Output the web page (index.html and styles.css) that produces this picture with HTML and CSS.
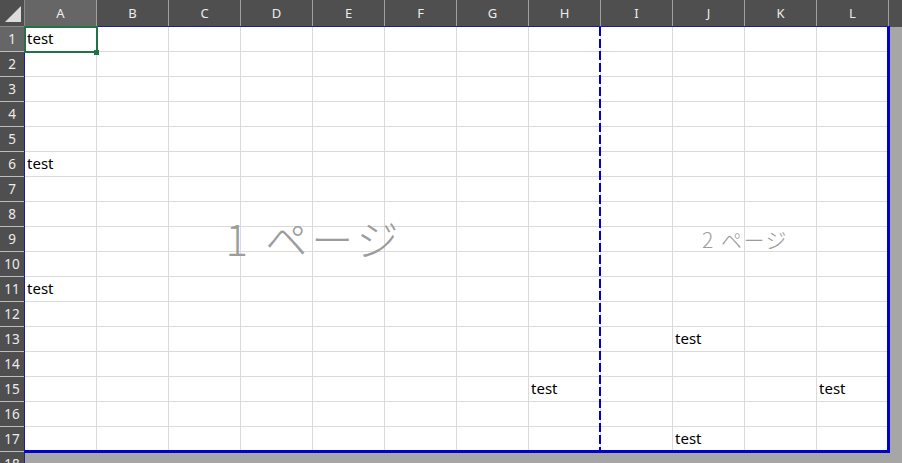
FILE: index.html
```html
<!DOCTYPE html>
<html lang="ja">
<head>
<meta charset="utf-8">
<title>Sheet</title>
<link rel="stylesheet" href="styles.css">
</head>
<body>
<div class="sheet">
  <div class="hdr-row">
    <div class="corner"><svg class="tri" width="16" height="16" viewBox="0 0 16 16"><polygon points="16,0 16,16 0,16" fill="#dcdcdc"/></svg></div>
    <div class="col-h sel">A</div><div class="col-h">B</div><div class="col-h">C</div><div class="col-h">D</div><div class="col-h">E</div><div class="col-h">F</div><div class="col-h">G</div><div class="col-h">H</div><div class="col-h">I</div><div class="col-h">J</div><div class="col-h">K</div><div class="col-h">L</div>
    <div class="col-fill"></div>
  </div>
  <div class="row"><div class="row-h sel">1</div><div class="cell">test</div><div class="cell"></div><div class="cell"></div><div class="cell"></div><div class="cell"></div><div class="cell"></div><div class="cell"></div><div class="cell"></div><div class="cell"></div><div class="cell"></div><div class="cell"></div><div class="cell"></div><div class="fill"></div></div>
  <div class="row"><div class="row-h">2</div><div class="cell"></div><div class="cell"></div><div class="cell"></div><div class="cell"></div><div class="cell"></div><div class="cell"></div><div class="cell"></div><div class="cell"></div><div class="cell"></div><div class="cell"></div><div class="cell"></div><div class="cell"></div><div class="fill"></div></div>
  <div class="row"><div class="row-h">3</div><div class="cell"></div><div class="cell"></div><div class="cell"></div><div class="cell"></div><div class="cell"></div><div class="cell"></div><div class="cell"></div><div class="cell"></div><div class="cell"></div><div class="cell"></div><div class="cell"></div><div class="cell"></div><div class="fill"></div></div>
  <div class="row"><div class="row-h">4</div><div class="cell"></div><div class="cell"></div><div class="cell"></div><div class="cell"></div><div class="cell"></div><div class="cell"></div><div class="cell"></div><div class="cell"></div><div class="cell"></div><div class="cell"></div><div class="cell"></div><div class="cell"></div><div class="fill"></div></div>
  <div class="row"><div class="row-h">5</div><div class="cell"></div><div class="cell"></div><div class="cell"></div><div class="cell"></div><div class="cell"></div><div class="cell"></div><div class="cell"></div><div class="cell"></div><div class="cell"></div><div class="cell"></div><div class="cell"></div><div class="cell"></div><div class="fill"></div></div>
  <div class="row"><div class="row-h">6</div><div class="cell">test</div><div class="cell"></div><div class="cell"></div><div class="cell"></div><div class="cell"></div><div class="cell"></div><div class="cell"></div><div class="cell"></div><div class="cell"></div><div class="cell"></div><div class="cell"></div><div class="cell"></div><div class="fill"></div></div>
  <div class="row"><div class="row-h">7</div><div class="cell"></div><div class="cell"></div><div class="cell"></div><div class="cell"></div><div class="cell"></div><div class="cell"></div><div class="cell"></div><div class="cell"></div><div class="cell"></div><div class="cell"></div><div class="cell"></div><div class="cell"></div><div class="fill"></div></div>
  <div class="row"><div class="row-h">8</div><div class="cell"></div><div class="cell"></div><div class="cell"></div><div class="cell"></div><div class="cell"></div><div class="cell"></div><div class="cell"></div><div class="cell"></div><div class="cell"></div><div class="cell"></div><div class="cell"></div><div class="cell"></div><div class="fill"></div></div>
  <div class="row"><div class="row-h">9</div><div class="cell"></div><div class="cell"></div><div class="cell"></div><div class="cell"></div><div class="cell"></div><div class="cell"></div><div class="cell"></div><div class="cell"></div><div class="cell"></div><div class="cell"></div><div class="cell"></div><div class="cell"></div><div class="fill"></div></div>
  <div class="row"><div class="row-h">10</div><div class="cell"></div><div class="cell"></div><div class="cell"></div><div class="cell"></div><div class="cell"></div><div class="cell"></div><div class="cell"></div><div class="cell"></div><div class="cell"></div><div class="cell"></div><div class="cell"></div><div class="cell"></div><div class="fill"></div></div>
  <div class="row"><div class="row-h">11</div><div class="cell">test</div><div class="cell"></div><div class="cell"></div><div class="cell"></div><div class="cell"></div><div class="cell"></div><div class="cell"></div><div class="cell"></div><div class="cell"></div><div class="cell"></div><div class="cell"></div><div class="cell"></div><div class="fill"></div></div>
  <div class="row"><div class="row-h">12</div><div class="cell"></div><div class="cell"></div><div class="cell"></div><div class="cell"></div><div class="cell"></div><div class="cell"></div><div class="cell"></div><div class="cell"></div><div class="cell"></div><div class="cell"></div><div class="cell"></div><div class="cell"></div><div class="fill"></div></div>
  <div class="row"><div class="row-h">13</div><div class="cell"></div><div class="cell"></div><div class="cell"></div><div class="cell"></div><div class="cell"></div><div class="cell"></div><div class="cell"></div><div class="cell"></div><div class="cell"></div><div class="cell">test</div><div class="cell"></div><div class="cell"></div><div class="fill"></div></div>
  <div class="row"><div class="row-h">14</div><div class="cell"></div><div class="cell"></div><div class="cell"></div><div class="cell"></div><div class="cell"></div><div class="cell"></div><div class="cell"></div><div class="cell"></div><div class="cell"></div><div class="cell"></div><div class="cell"></div><div class="cell"></div><div class="fill"></div></div>
  <div class="row"><div class="row-h">15</div><div class="cell"></div><div class="cell"></div><div class="cell"></div><div class="cell"></div><div class="cell"></div><div class="cell"></div><div class="cell"></div><div class="cell">test</div><div class="cell"></div><div class="cell"></div><div class="cell"></div><div class="cell">test</div><div class="fill"></div></div>
  <div class="row"><div class="row-h">16</div><div class="cell"></div><div class="cell"></div><div class="cell"></div><div class="cell"></div><div class="cell"></div><div class="cell"></div><div class="cell"></div><div class="cell"></div><div class="cell"></div><div class="cell"></div><div class="cell"></div><div class="cell"></div><div class="fill"></div></div>
  <div class="row"><div class="row-h">17</div><div class="cell"></div><div class="cell"></div><div class="cell"></div><div class="cell"></div><div class="cell"></div><div class="cell"></div><div class="cell"></div><div class="cell"></div><div class="cell"></div><div class="cell">test</div><div class="cell"></div><div class="cell"></div><div class="fill"></div></div>
  <div class="row"><div class="row-h">18</div><div class="out"></div></div>

  <div class="page-border"></div>
  <div class="page-break"></div>
  <div class="wm wm1"><span>1 ページ</span></div>
  <div class="wm wm2"><span>2 ページ</span></div>
  <div class="selection"><div class="handle"></div></div>
</div>
</body>
</html>
```
FILE: styles.css
```css
* { box-sizing: border-box; }
html, body { margin: 0; padding: 0; background: #a6a6a6; overflow: hidden; }
body { width: 902px; height: 463px; }

.sheet {
  position: relative;
  width: 902px;
  height: 463px;
  overflow: hidden;
  font-family: "Noto Sans", "Noto Sans CJK JP", sans-serif;
}

.hdr-row {
  display: flex;
  height: 27px;
  background: #4f4f4f;
}
.corner {
  width: 25px;
  height: 27px;
  border-right: 1px solid #8a8a8a;
  border-bottom: 1px solid #8a8a8a;
  background: #4f4f4f;
  display: flex;
  align-items: flex-end;
  justify-content: flex-end;
  padding: 0 3px 4px 0;
}
.tri { display: block; }
.col-h {
  width: 72px;
  height: 27px;
  border-right: 1px solid #a0a0a0;
  border-bottom: 1px solid #24249a;
  color: #ececec;
  font-size: 13px;
  display: flex;
  align-items: center;
  justify-content: center;
  padding-bottom: 1px;
}
.col-h.sel { background: #666666; }
.col-fill { flex: 1; height: 27px; background: #4f4f4f; }

.row { display: flex; height: 25px; }
.row-h {
  width: 25px;
  height: 25px;
  background: #4f4f4f;
  border-right: 1px solid #24249a;
  border-bottom: 1px solid #bdbdbd;
  color: #ececec;
  font-size: 13.5px;
  display: flex;
  align-items: center;
  justify-content: center;
}
.row-h.sel { background: #666666; }
.cell {
  width: 72px;
  height: 25px;
  background: #ffffff;
  border-right: 1px solid #dadada;
  border-bottom: 1px solid #dadada;
  font-size: 15px;
  line-height: 18px;
  color: #000;
  padding: 0 0 4px 2px;
  display: flex;
  align-items: flex-end;
}
.fill { flex: 1; background: #a6a6a6; }
.out { flex: 1; background: #a6a6a6; }

.page-border {
  position: absolute;
  left: 24px;
  top: 26px;
  width: 866px;
  height: 427px;
  border-left: 1px solid #1c1c9e;
  border-top: 1px solid #1c1c9e;
  border-right: 3px solid #0000cc;
  border-bottom: 3px solid #0000cc;
  pointer-events: none;
}
.page-break {
  position: absolute;
  left: 599px;
  top: 27px;
  width: 2px;
  height: 424px;
  background: repeating-linear-gradient(to bottom, #0000cc 0, #0000cc 9px, transparent 9px, transparent 12px);
}

.wm {
  position: absolute;
  top: 27px;
  height: 424px;
  display: flex;
  align-items: center;
  justify-content: center;
  color: #9c9c9c;
  font-family: "Noto Sans CJK JP", sans-serif;
  font-weight: 300;
  white-space: nowrap;
}
.wm1 { left: 27px; width: 574px; font-size: 42px; letter-spacing: 4px; padding-bottom: 4px; }
.wm2 { left: 602px; width: 286px; font-size: 21px; letter-spacing: 1.5px; padding-bottom: 1px; }

.selection {
  position: absolute;
  left: 24px;
  top: 26px;
  width: 74px;
  height: 27px;
  border: 2px solid #217346;
}
.handle {
  position: absolute;
  right: -3px;
  bottom: -4px;
  width: 5px;
  height: 5px;
  background: #217346;
}
```
